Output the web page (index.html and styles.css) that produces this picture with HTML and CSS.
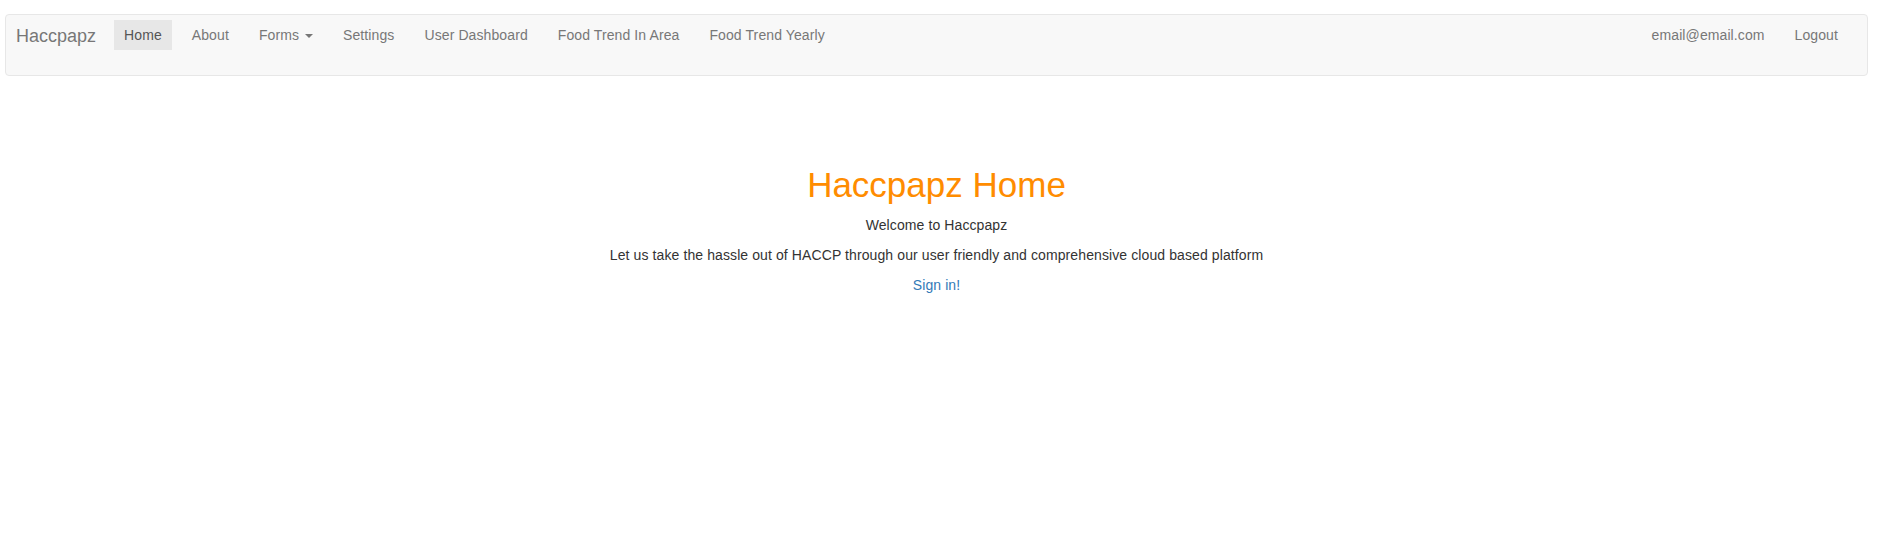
FILE: index.html
```html
<!DOCTYPE html>
<html lang="en">
<head>
<meta charset="utf-8">
<title>Haccpapz Home</title>
<link rel="stylesheet" href="styles.css">
</head>
<body>
<div class="page">
  <nav class="navbar">
    <a class="brand" href="#">Haccpapz</a>
    <ul class="nav">
      <li class="active"><a href="#">Home</a></li>
      <li><a href="#">About</a></li>
      <li><a href="#">Forms <span class="caret"></span></a></li>
      <li><a href="#">Settings</a></li>
      <li><a href="#">User Dashboard</a></li>
      <li><a href="#">Food Trend In Area</a></li>
      <li><a href="#">Food Trend Yearly</a></li>
    </ul>
    <ul class="nav nav-right">
      <li><a href="#">email@email.com</a></li>
      <li><a href="#">Logout</a></li>
    </ul>
  </nav>
  <main class="content">
    <h1 class="title">Haccpapz Home</h1>
    <p>Welcome to Haccpapz</p>
    <p>Let us take the hassle out of HACCP through our user friendly and comprehensive cloud based platform</p>
    <p><a class="link" href="#">Sign in!</a></p>
  </main>
</div>
</body>
</html>
```

FILE: styles.css
```css
* { box-sizing: border-box; }
html, body {
  margin: 0;
  padding: 0;
  background: #fff;
}
body {
  font-family: "Liberation Sans", Arial, Helvetica, sans-serif;
  font-size: 14px;
  line-height: 20px;
  letter-spacing: 0.1px;
  color: #333;
}
a { text-decoration: none; }

.page {
  margin: 14px 16px 0 5px;
}

.navbar {
  display: flex;
  align-items: flex-start;
  height: 62px;
  background: #f8f8f8;
  border: 1px solid #e7e7e7;
  border-radius: 4px;
}

.brand {
  display: block;
  padding: 11px 13px 0 10px;
  font-size: 18px;
  line-height: 20px;
  letter-spacing: 0;
  color: #777;
}

.nav {
  display: flex;
  list-style: none;
  margin: 5px 0 0 0;
  padding: 0;
}
.nav li {
  margin: 0 5px;
}
.nav a {
  display: block;
  padding: 5px 10px;
  line-height: 20px;
  color: #777;
}
.nav .active a {
  background: #e7e7e7;
  color: #555;
}
.nav-right {
  margin-left: auto;
  padding-right: 14px;
}

.caret {
  display: inline-block;
  width: 0;
  height: 0;
  margin-left: 2px;
  vertical-align: middle;
  border-top: 4px solid #777;
  border-left: 4px solid transparent;
  border-right: 4px solid transparent;
}

.content {
  text-align: center;
}
.title {
  margin: 90px 0 10px;
  font-size: 35px;
  font-weight: 400;
  line-height: 38.5px;
  letter-spacing: 0;
  color: #ff8c00;
}
.content p {
  margin: 0 0 10px;
}
.link {
  color: #337ab7;
}
```
